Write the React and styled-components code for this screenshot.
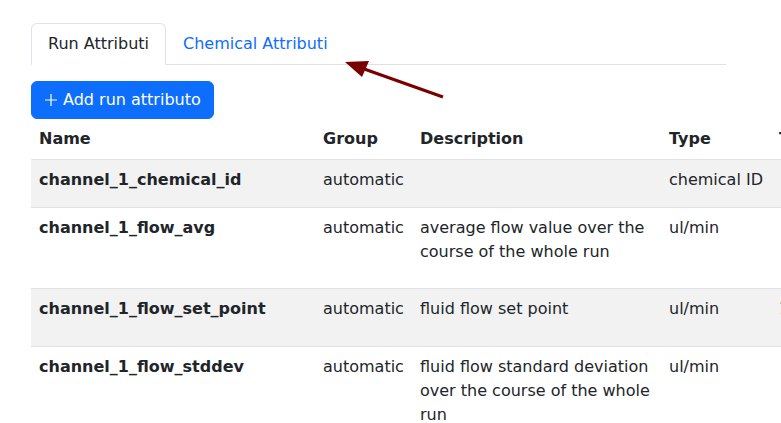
import React from "react";
import styled, { createGlobalStyle } from "styled-components";

const Global = createGlobalStyle`
  html, body { margin: 0; padding: 0; background: #fff; overflow: hidden; }
  body {
    font-family: "DejaVu Sans", "Liberation Sans", sans-serif;
    font-size: 16px;
    line-height: 24px;
    color: #212529;
  }
  * { box-sizing: border-box; }
`;

const Page = styled.div`
  position: relative;
  width: 781px;
  height: 423px;
  overflow: hidden;
  padding: 23px 0 0 31px;
`;

const Container = styled.div`
  width: 695px;
`;

const Tabs = styled.ul`
  display: flex;
  list-style: none;
  margin: 0;
  padding: 0;
  border-bottom: 1px solid #dee2e6;
`;

const Tab = styled.li`
  margin-bottom: -1px;
  padding: 8px 16px;
  border: 1px solid ${(p) => (p.$active ? "#dee2e6" : "transparent")};
  border-bottom-color: ${(p) => (p.$active ? "#fff" : "transparent")};
  border-radius: 6px 6px 0 0;
  background: ${(p) => (p.$active ? "#fff" : "transparent")};
  color: ${(p) => (p.$active ? "#212529" : "#0d6efd")};
  white-space: nowrap;
`;

const Button = styled.button`
  display: inline-flex;
  align-items: center;
  gap: 5px;
  margin-top: 16px;
  height: 38px;
  padding: 6px 12px;
  border: 1px solid #0d6efd;
  border-radius: 6px;
  background: #0d6efd;
  color: #fff;
  font: inherit;
  line-height: 24px;
`;

const Table = styled.table`
  display: block;
  border-collapse: collapse;
  table-layout: fixed;
  width: 860px;
`;

const Col = styled.col`
  width: ${(p) => p.$w}px;
`;

const Row = styled.tr`
  height: ${(p) => p.$h}px;
  background: ${(p) => (p.$striped ? "#f2f2f2" : "#fff")};
  border-bottom: 1px solid #dee2e6;
`;

const HeadRow = styled.tr`
  height: 40px;
  border-bottom: 1px solid #dee2e6;
`;

const Th = styled.th`
  text-align: left;
  vertical-align: top;
  padding: 8px;
  font-weight: bold;
  white-space: nowrap;
`;

const Td = styled.td`
  vertical-align: top;
  padding: 8px;
  font-weight: ${(p) => (p.$bold ? "bold" : "normal")};
  white-space: ${(p) => (p.$wrap ? "normal" : "nowrap")};
`;

const Arrow = styled.svg`
  position: absolute;
  left: 0;
  top: 0;
  pointer-events: none;
`;

const rows = [
  { name: "channel_1_chemical_id", group: "automatic", desc: "", type: "chemical ID", extra: "", h: 48, striped: true },
  { name: "channel_1_flow_avg", group: "automatic", desc: "average flow value over the course of the whole run", type: "ul/min", extra: "", h: 81 },
  { name: "channel_1_flow_set_point", group: "automatic", desc: "fluid flow set point", type: "ul/min", extra: "1", h: 58, striped: true },
  { name: "channel_1_flow_stddev", group: "automatic", desc: "fluid flow standard deviation over the course of the whole run", type: "ul/min", extra: "", h: 90 },
];

export default function App() {
  return (
    <>
      <Global />
      <Page>
        <Container>
          <Tabs>
            <Tab $active>Run Attributi</Tab>
            <Tab>Chemical Attributi</Tab>
          </Tabs>
          <Button>
            <svg width="14" height="14" viewBox="0 0 14 14">
              <path d="M7 1v12M1 7h12" stroke="#fff" strokeWidth="1.2" fill="none" />
            </svg>
            Add run attributo
          </Button>
          <Table>
            <colgroup>
              <Col $w={284} />
              <Col $w={97} />
              <Col $w={249} />
              <Col $w={110} />
              <Col $w={120} />
            </colgroup>
            <thead>
              <HeadRow>
                <Th>Name</Th>
                <Th>Group</Th>
                <Th>Description</Th>
                <Th>Type</Th>
                <Th>Tags</Th>
              </HeadRow>
            </thead>
            <tbody>
              {rows.map((r) => (
                <Row key={r.name} $h={r.h} $striped={r.striped}>
                  <Td $bold>{r.name}</Td>
                  <Td>{r.group}</Td>
                  <Td $wrap>{r.desc}</Td>
                  <Td>{r.type}</Td>
                  <Td>{r.extra}</Td>
                </Row>
              ))}
            </tbody>
          </Table>
        </Container>
        <Arrow width="781" height="423" viewBox="0 0 781 423">
          <line x1="443" y1="97" x2="360" y2="67.5" stroke="#7a0000" strokeWidth="3" />
          <polygon points="345,62 369,61 362,77" fill="#7a0000" />
        </Arrow>
      </Page>
    </>
  );
}
